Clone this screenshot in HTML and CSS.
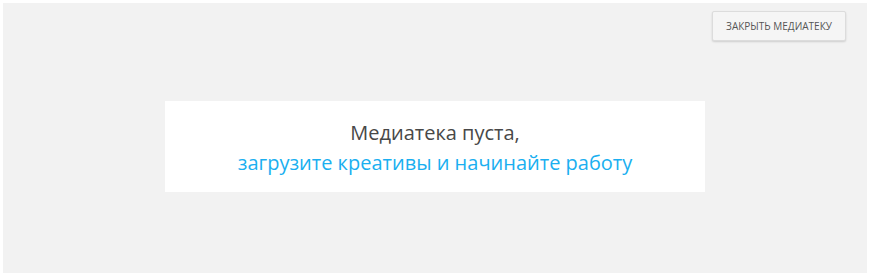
FILE: index.html
```html
<!DOCTYPE html>
<html lang="ru">
<head>
    <meta charset="UTF-8">
    <meta name="viewport" content="width=device-width, initial-scale=1.0">
    <title>Медиатека</title>
    <link rel="stylesheet" href="styles.css">
</head>
<body>
    <div class="library">
        <div class="library-toolbar">
            <button class="close-button">Закрыть медиатеку</button>
        </div>
        <div class="empty-box">
            <p class="empty-title">Медиатека пуста,</p>
            <a class="empty-link" href="#">загрузите креативы и начинайте работу</a>
        </div>
    </div>
</body>
</html>
```

FILE: styles.css
```css
body {
    margin: 0;
    padding: 3px;
    background-color: #ffffff;
    font-family: 'Open Sans', sans-serif;
}

.library {
    background-color: #f2f2f2;
    height: 270px;
    box-sizing: border-box;
    padding: 8px 21px 0 162px;
}

.library-toolbar {
    display: flex;
    justify-content: flex-end;
}

.close-button {
    width: 134px;
    height: 30px;
    background-color: #f5f5f5;
    border: 1px solid #dcdcdc;
    border-radius: 2px;
    box-shadow: 0 1px 2px rgba(0, 0, 0, 0.15);
    font-family: 'Open Sans', sans-serif;
    font-size: 10px;
    text-transform: uppercase;
    color: #555;
    padding: 0;
    cursor: pointer;
}

.empty-box {
    width: 540px;
    height: 91px;
    margin-top: 60px;
    background-color: #ffffff;
    box-sizing: border-box;
    padding-top: 17px;
    text-align: center;
    font-size: 20px;
    line-height: 30px;
}

.empty-title {
    margin: 0;
    color: #484848;
}

.empty-link {
    color: #1aaff0;
    text-decoration: none;
}
```
